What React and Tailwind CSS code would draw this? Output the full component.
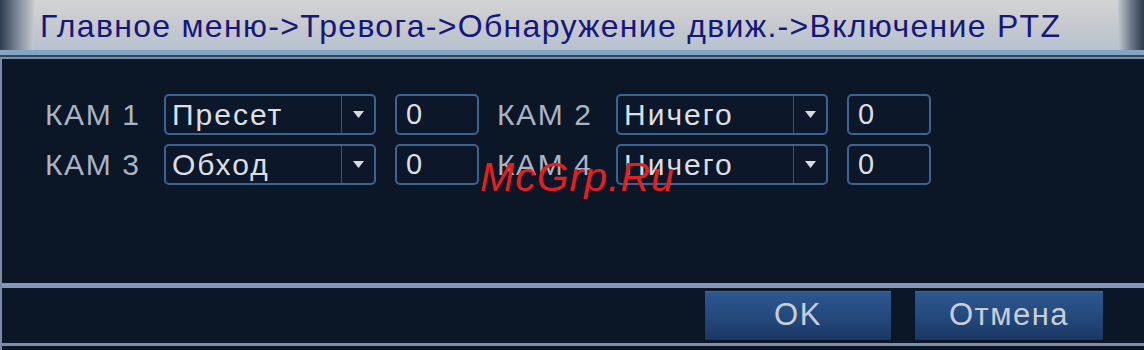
import React from "react";

const rows = [
  [
    { label: "КАМ 1", value: "Пресет", num: "0" },
    { label: "КАМ 2", value: "Ничего", num: "0" },
  ],
  [
    { label: "КАМ 3", value: "Обход", num: "0" },
    { label: "КАМ 4", value: "Ничего", num: "0" },
  ],
];

const Field = ({ label, value, num }) => (
  <div className="flex items-center">
    <span className="w-[119px] text-[30px] leading-none tracking-[1.6px] text-[#a9b4c6]">
      {label}
    </span>
    <div className="flex h-[41px] w-[212px] items-stretch rounded-[5px] border-2 border-[#3f6391] bg-[#0c1829]">
      <span className="flex flex-1 items-center pl-[6px] text-[30px] tracking-[2px] text-[#dcdfe4]">
        {value}
      </span>
      <span className="flex w-[33px] items-center justify-center border-l border-[#3a5478]">
        <svg width="11" height="7" viewBox="0 0 11 7">
          <path d="M0 0 L11 0 L5.5 7 Z" fill="#d6dae2" />
        </svg>
      </span>
    </div>
    <div className="ml-[19px] flex h-[41px] w-[84px] items-center rounded-[5px] border-2 border-[#3f6391] bg-[#0c1829] pl-[9px] text-[29px] text-[#dcdfe4]">
      {num}
    </div>
  </div>
);

const Button = ({ children, className }) => (
  <button
    className={
      "flex h-[51px] items-center justify-center border border-[#0a1322] bg-gradient-to-b from-[#2d5890] via-[#244a7e] to-[#1a3762] text-[31px] tracking-[1.5px] text-[#c9ced6] shadow-[inset_0_1px_0_#3b6aa8] " +
      className
    }
  >
    {children}
  </button>
);

export default function App() {
  return (
    <div
      className="relative flex h-[350px] w-[1144px] flex-col overflow-hidden bg-[#0b1626]"
      style={{ fontFamily: '"Liberation Sans", Arial, sans-serif' }}
    >
      {/* title bar */}
      <div className="flex h-[50px]">
        <div className="w-[34px] bg-gradient-to-r from-[#2e3d50] via-[#7d8896] to-[#c7cacf]" />
        <div className="flex flex-1 items-center bg-gradient-to-b from-[#d3d4d3] via-[#c6c9ce] to-[#b6c2cf] pl-[6px] pt-[2px]">
          <span className="text-[32px] leading-none tracking-[1.3px] text-[#16177a]">
            Главное меню-&gt;Тревога-&gt;Обнаружение движ.-&gt;Включение PTZ
          </span>
        </div>
        <div className="w-[26px] bg-gradient-to-r from-[#c3c8cf] via-[#6c7a8c] to-[#2c3a4c]" />
      </div>
      <div className="h-[5px] bg-[#86a3c4]" />
      <div className="h-[2px] bg-[#2f4866]" />

      {/* panel */}
      <div className="flex flex-1 flex-col border-l-2 border-t-2 border-[#7c8ca4]">
        <div className="flex h-[224px] flex-col gap-[9px] pl-[43px] pt-[35px]">
          {rows.map((row, i) => (
            <div key={i} className="flex gap-[18px]">
              {row.map((f) => (
                <Field key={f.label} {...f} />
              ))}
            </div>
          ))}
        </div>
        <div className="h-[5px] bg-[#8497b6]" />
        <div className="flex h-[55px] items-center justify-end pr-[40px]">
          <Button className="w-[188px]">OK</Button>
          <Button className="ml-[22px] w-[190px]">Отмена</Button>
        </div>
        <div className="h-[3px] bg-[#7f8ea6]" />
      </div>

      {/* watermark */}
      <span className="absolute left-[480px] top-[157px] text-[41px] italic leading-none tracking-[1px] text-[#e3201f]">
        McGrp.Ru
      </span>
    </div>
  );
}
